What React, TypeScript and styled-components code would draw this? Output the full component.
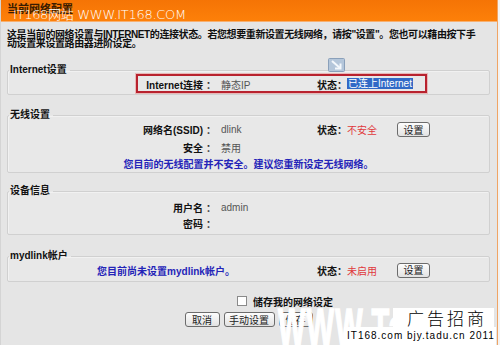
import React from 'react'
import styled, { createGlobalStyle } from 'styled-components'

const GlobalStyle = createGlobalStyle`
  html, body {
    margin: 0;
    padding: 0;
    background: #f3f3f3;
  }
  body {
    font-family: "Liberation Sans", "Noto Sans CJK SC", sans-serif;
  }
`

const Page = styled.div`
  position: relative;
  width: 498px;
  height: 345px;
  padding: 0 7px 0 6px;
  box-sizing: border-box;
  background: #e5e5e5;
  border-left: 1px solid #d4d4d4;
  border-right: 1px solid #f0a464;
  overflow: hidden;
  color: #111;
  font-family: "Liberation Sans", "Noto Sans CJK SC", sans-serif;
`

const Header = styled.div`
  height: 22px;
  margin: 0 -7px 0 -6px;
  padding: 4px 0 0 6px;
  box-sizing: border-box;
  background: linear-gradient(#f57405, #fd8009);
  border-bottom: 1px solid #f7b070;
`

const Title = styled.div`
  font-size: 11px;
  line-height: 11px;
  font-weight: bold;
  color: #3a1c00;
`

const Intro = styled.div`
  margin-top: 8px;
  font-size: 10px;
  line-height: 9px;
  font-weight: bold;
  letter-spacing: -0.4px;
  white-space: nowrap;
  color: #101010;
`

const Section = styled.fieldset<{ $mt: number; $pt: number; $pb: number }>`
  margin: ${({ $mt }) => $mt}px 0 0;
  padding: ${({ $pt }) => $pt}px 0 ${({ $pb }) => $pb}px;
  min-width: 0;
  border: 1px solid #d0d0d0;
  border-radius: 2px;
  background: #e8e8e8;
  box-shadow: inset 1px 1px 0 #f1f1f1;
`

const Legend = styled.legend`
  margin-left: 1px;
  padding: 0 3px 0 1px;
  font-size: 10px;
  line-height: 10px;
  font-weight: bold;
  color: #111;
`

const Row = styled.div<{ $h: number }>`
  display: grid;
  grid-template-columns: 195px 16px 98px 30px 50px auto;
  align-items: center;
  height: ${({ $h }) => $h}px;
  font-size: 10px;
  white-space: nowrap;
`

const Label = styled.span`
  grid-column: 1;
  text-align: right;
  font-weight: bold;
`

const Colon = styled.span`
  grid-column: 2;
  text-align: center;
  font-weight: bold;
  color: #333;
`

const Value = styled.span`
  grid-column: 3;
  padding-left: 2px;
  color: #555;
`

const StatusLabel = styled.span`
  grid-column: 4;
  font-weight: bold;
`

const StatusValue = styled.span<{ $bad?: boolean }>`
  grid-column: 5;
  color: ${({ $bad }) => ($bad ? '#e0383c' : '#555')};
`

const Selected = styled.span`
  padding: 0 1px;
  background: #3169c6;
  color: #fff;
  line-height: 12px;
`

const Message = styled.span<{ $span: string; $pl: number }>`
  grid-column: ${({ $span }) => $span};
  padding-left: ${({ $pl }) => $pl}px;
  text-align: center;
  font-weight: bold;
  color: #2424b8;
`

const Btn = styled.button<{ $w: number }>`
  width: ${({ $w }) => $w}px;
  height: 15px;
  padding: 0;
  box-sizing: border-box;
  font-family: "Noto Sans CJK SC", sans-serif;
  font-size: 10px;
  line-height: 12px;
  color: #222;
  background: linear-gradient(#fdfdfd, #e2e2e2);
  border: 1px solid #6c6c6c;
  border-radius: 3px;
`

const RowBtn = styled(Btn)`
  grid-column: 6;
`

const SaveRow = styled.label`
  display: flex;
  align-items: center;
  gap: 6px;
  height: 14px;
  margin-top: 12px;
  padding-left: 230px;
  font-size: 10px;
  font-weight: bold;
`

const Check = styled.input`
  appearance: none;
  width: 10px;
  height: 10px;
  margin: 0;
  background: #fff;
  border: 1px solid #8a8a8a;
`

const Buttons = styled.div`
  display: flex;
  justify-content: center;
  gap: 4px;
  margin-top: 4px;
`

const Mark = styled.div`
  position: absolute;
  left: 12px;
  top: 8px;
  font-family: "DejaVu Sans", "Noto Sans CJK SC", sans-serif;
  font-size: 13px;
  font-weight: 300;
  line-height: 14px;
  color: #fff;
  letter-spacing: -0.3px;
  white-space: nowrap;
`

const Annotation = styled.div`
  position: absolute;
  left: 135px;
  top: 74px;
  width: 291px;
  height: 19px;
  box-sizing: border-box;
  border: 2px solid #b8222e;
  box-shadow: 0 0 0 1px rgba(232, 150, 150, 0.6);
  pointer-events: none;
`

const ResizeIcon = styled.svg`
  position: absolute;
  left: 327px;
  top: 58px;
`

const BigMark = styled.div`
  position: absolute;
  left: 277px;
  top: 301px;
  font-family: "Liberation Sans", sans-serif;
  font-size: 52px;
  line-height: 52px;
  font-weight: bold;
  letter-spacing: 2px;
  color: #fff;
  -webkit-text-stroke: 1.5px #fff;
  transform: scaleX(0.56);
  transform-origin: left top;
  white-space: nowrap;
`

const Stamp = styled.div<{ $l: number; $t: number; $w: number; $h: number }>`
  position: absolute;
  left: ${({ $l }) => $l}px;
  top: ${({ $t }) => $t}px;
  width: ${({ $w }) => $w}px;
  height: ${({ $h }) => $h}px;
  background: #fff;
  color: #000;
  overflow: hidden;
  white-space: nowrap;
`

const StampBig = styled.div`
  padding: 1px 0 0 14px;
  font-family: "Noto Sans CJK SC", sans-serif;
  font-size: 17px;
  line-height: 18px;
  font-weight: 300;
  letter-spacing: 3px;
`

const StampSmall = styled.div`
  padding: 3px 0 0 3px;
  font-family: "Liberation Sans Narrow", "Liberation Sans", sans-serif;
  font-size: 10px;
  line-height: 11px;
  letter-spacing: 1px;
`

export default function App() {
  return (
    <>
      <GlobalStyle />
      <Page>
        <Header>
          <Title>当前网络配置</Title>
        </Header>
        <Intro>
          这是当前的网络设置与INTERNET的连接状态。若您想要重新设置无线网络，请按"设置"。您也可以藉由按下手
          <br />
          动设置来设置路由器进阶设定。
        </Intro>

        <Section $mt={17} $pt={0} $pb={1}>
          <Legend>Internet设置</Legend>
          <Row $h={18}>
            <Label>Internet连接</Label>
            <Colon>：</Colon>
            <Value>静态IP</Value>
            <StatusLabel>状态：</StatusLabel>
            <StatusValue>
              <Selected>已连上Internet</Selected>
            </StatusValue>
          </Row>
        </Section>

        <Section $mt={15} $pt={0} $pb={1}>
          <Legend>无线设置</Legend>
          <Row $h={19}>
            <Label>网络名(SSID)</Label>
            <Colon>：</Colon>
            <Value>dlink</Value>
            <StatusLabel>状态：</StatusLabel>
            <StatusValue $bad>不安全</StatusValue>
            <RowBtn $w={33}>设置</RowBtn>
          </Row>
          <Row $h={16}>
            <Label>安全</Label>
            <Colon>：</Colon>
            <Value>禁用</Value>
          </Row>
          <Row $h={16}>
            <Message $span="1 / -1" $pl={0}>
              您目前的无线配置并不安全。建议您重新设定无线网络。
            </Message>
          </Row>
        </Section>

        <Section $mt={13} $pt={3} $pb={3}>
          <Legend>设备信息</Legend>
          <Row $h={16}>
            <Label>用户名</Label>
            <Colon>：</Colon>
            <Value>admin</Value>
          </Row>
          <Row $h={16}>
            <Label>密码</Label>
            <Colon>：</Colon>
          </Row>
        </Section>

        <Section $mt={16} $pt={0} $pb={2}>
          <Legend>mydlink帐户</Legend>
          <Row $h={18}>
            <Message $span="1 / 4" $pl={7}>
              您目前尚未设置mydlink帐户。
            </Message>
            <StatusLabel>状态：</StatusLabel>
            <StatusValue $bad>未启用</StatusValue>
            <RowBtn $w={33}>设置</RowBtn>
          </Row>
        </Section>

        <SaveRow>
          <Check type="checkbox" />
          储存我的网络设定
        </SaveRow>
        <Buttons>
          <Btn $w={35}>取消</Btn>
          <Btn $w={51}>手动设置</Btn>
          <Btn $w={34}>储存</Btn>
        </Buttons>

        <Mark>IT168网站 WWW.IT168.COM</Mark>
        <Annotation />
        <ResizeIcon width="17" height="14" viewBox="0 0 17 14">
          <rect x="0.5" y="0.5" width="16" height="13" rx="1" fill="#b4c6da" stroke="#8aa0ba" />
          <path d="M4 3 L12 10" stroke="#f4f8fc" strokeWidth="2" />
          <path d="M7 10.5 H12.5 V5.5" fill="none" stroke="#f4f8fc" strokeWidth="2" />
        </ResizeIcon>

        <BigMark>WWW.Ta</BigMark>
        <Stamp $l={392} $t={308} $w={101} $h={20}>
          <StampBig>广告招商</StampBig>
        </Stamp>
        <Stamp $l={343} $t={327} $w={152} $h={18}>
          <StampSmall>IT168.com  bjy.tadu.cn 2011</StampSmall>
        </Stamp>
      </Page>
    </>
  )
}
